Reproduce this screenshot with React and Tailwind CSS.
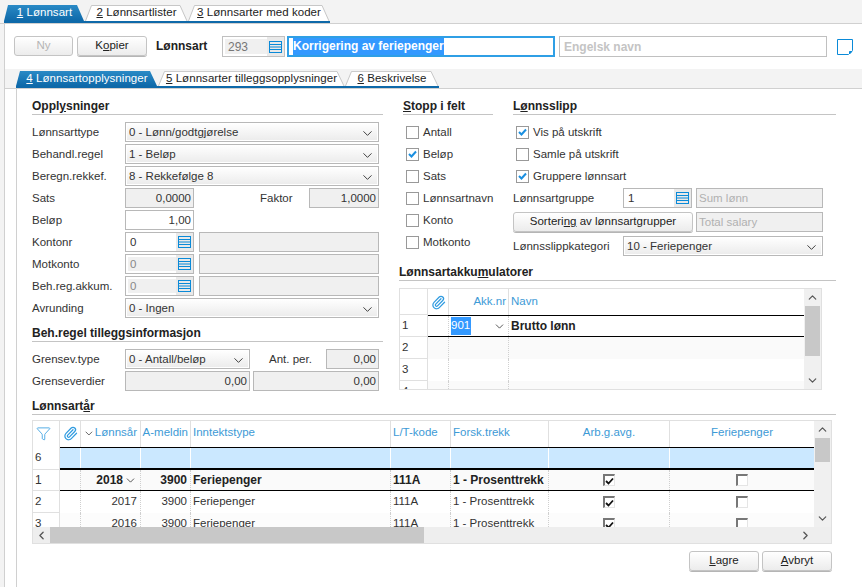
import { ChevronDown, ChevronUp, ChevronLeft, ChevronRight, Paperclip, Funnel } from 'lucide-react';

const TOP_TABS = [
  { key: '1', label: 'Lønnsart', w: 81, active: true },
  { key: '2', label: 'Lønnsartlister', w: 103 },
  { key: '3', label: 'Lønnsarter med koder', w: 142 },
];

const SUB_TABS = [
  { key: '4', label: 'Lønnsartopplysninger', w: 142, active: true },
  { key: '5', label: 'Lønnsarter tilleggsopplysninger', w: 187 },
  { key: '6', label: 'Beskrivelse', w: 94 },
];

const STOPP = [
  { label: 'Antall' },
  { label: 'Beløp', checked: true },
  { label: 'Sats' },
  { label: 'Lønnsartnavn' },
  { label: 'Konto' },
  { label: 'Motkonto' },
];

const YEARS = [
  { nr: 1, year: '2018', bold: true },
  { nr: 2, year: '2017' },
  { nr: 3, year: '2016', zebra: true },
];

function Tab({ tab }) {
  return (
    <div className="relative h-full shrink-0" style={{ width: tab.w }}>
      <svg className="absolute inset-0 h-full w-full" viewBox={`0 0 ${tab.w} 17`} preserveAspectRatio="none">
        <defs>
          <linearGradient id="tabBlue" x1="0" y1="0" x2="0" y2="1">
            <stop offset="0" stopColor="#2a8ac6" />
            <stop offset="1" stopColor="#0e69a9" />
          </linearGradient>
        </defs>
        {tab.active ? (
          <path d={`M0 17 L4 0 L${tab.w - 8} 0 L${tab.w - 1} 17 Z`} fill="url(#tabBlue)" />
        ) : (
          <path d={`M0.5 17 L6.5 0.5 L${tab.w - 8} 0.5 L${tab.w - 1} 17`} fill="#fff" stroke="#c4c4c4" />
        )}
      </svg>
      <div className={`relative flex h-full items-center justify-center text-[11.5px] tracking-[0.05px] whitespace-nowrap ${tab.active ? 'text-white' : 'text-[#222]'}`}>
        <span><u>{tab.key}</u> {tab.label}</span>
      </div>
    </div>
  );
}

function LookupIcon() {
  return (
    <svg width="13" height="12" viewBox="0 0 13 12" fill="none" stroke="#0a8ad8">
      <rect x="0.5" y="0.5" width="12" height="11" />
      <path d="M1 3.5H12M1 6H12M1 8.5H12" />
    </svg>
  );
}

function Button({ children, disabled, className = '' }) {
  return (
    <button className={`h-[20px] rounded-[3px] border border-[#c4c4c4] bg-gradient-to-b from-white to-[#ececec] text-[11.5px] shadow-[0_1px_0_#b5b5b5] ${disabled ? 'text-[#b5b5b5] shadow-none' : 'text-[#222]'} ${className}`}>
      {children}
    </button>
  );
}

function Select({ value, className = '' }) {
  return (
    <div className={`flex h-[20px] items-center justify-between border border-[#b8b8b8] bg-gradient-to-b from-white to-[#ebebeb] px-[3px] pt-[2px] text-[11.5px] text-[#333] shadow-[inset_0_0_0_1px_#fff] ${className}`}>
      <span>{value}</span>
      <ChevronDown size={15} strokeWidth={1.5} className="text-[#333]" />
    </div>
  );
}

function Field({ value, disabled, align = 'right', className = '', muted }) {
  return (
    <div className={`flex h-[20px] items-center border border-[#b8b8b8] px-[2px] pt-[2px] text-[11.5px] ${disabled ? 'bg-[#f0f0f0]' : 'bg-white'} ${align === 'right' ? 'justify-end' : 'justify-start'} ${muted ? 'text-[#b0b0b0]' : 'text-[#333]'} ${className}`}>
      {value}
    </div>
  );
}

function Lookup({ value, disabled, className = 'w-[69px]' }) {
  return (
    <div className={`flex h-[20px] shrink-0 items-stretch border border-[#b8b8b8] bg-white ${className}`}>
      <div className={`m-[2px] mr-0 flex flex-1 items-center pt-[2px] pl-[2px] text-[11.5px] ${disabled ? 'bg-[#f0f0f0] text-[#888]' : 'text-[#333]'}`}>{value}</div>
      <div className="flex w-[17px] items-center justify-center bg-[#e9e9e9]">
        <LookupIcon />
      </div>
    </div>
  );
}

function Heading({ children, className = '' }) {
  return (
    <div className={`border-b border-[#c4c4c4] text-[12px] leading-[16px] font-bold text-[#222] ${className}`}>
      {children}
    </div>
  );
}

function Label({ children, className = '' }) {
  return <div className={`shrink-0 pt-[2px] text-[11.5px] text-[#333] ${className}`}>{children}</div>;
}

function Row({ label, children }) {
  return (
    <div className="flex h-[22px] items-center">
      <Label className="w-[93px]">{label}</Label>
      {children}
    </div>
  );
}

function Check({ checked }) {
  return (
    <div className="flex h-[13px] w-[13px] shrink-0 items-center justify-center border border-[#999] bg-white">
      {checked && (
        <svg width="9" height="8" viewBox="0 0 9 8" fill="none" stroke="#1a8fe0" strokeWidth="2">
          <path d="M1 4 L3.5 6.5 L8 1.5" />
        </svg>
      )}
    </div>
  );
}

function CheckRow({ label, checked }) {
  return (
    <div className="flex h-[22px] items-center gap-[4px] pl-[3px]">
      <Check checked={checked} />
      <Label>{label}</Label>
    </div>
  );
}

function GridCheck({ checked }) {
  return (
    <div className="flex h-[12px] w-[12px] items-center justify-center border-t-2 border-r border-b border-l-2 border-t-[#777] border-r-[#e5e5e5] border-b-[#e5e5e5] border-l-[#777] bg-white">
      {checked && (
        <svg width="9" height="8" viewBox="0 0 9 8" fill="none" stroke="#111" strokeWidth="1.8">
          <path d="M1 4 L3.5 6.5 L8 1.5" />
        </svg>
      )}
    </div>
  );
}

function VScroll({ thumbH }) {
  return (
    <div className="flex w-[17px] shrink-0 flex-col items-center bg-[#f0f0f0]">
      <ChevronUp size={13} strokeWidth={2.2} className="h-[17px] text-[#555]" />
      <div className="flex-1 self-stretch px-[1px]">
        <div className="bg-[#c8c8c8]" style={{ height: thumbH }} />
      </div>
      <ChevronDown size={13} strokeWidth={2.2} className="h-[17px] text-[#555]" />
    </div>
  );
}

const AKK_COLS = 'grid grid-cols-[21px_60px_1fr]';

function AkkTable() {
  const cell = 'border-r border-dotted border-[#d0d0d0]';
  const num = 'flex w-[28px] shrink-0 items-center border-r border-b border-[#e0e0e0] pl-[2px] text-[#333]';
  return (
    <div className="mt-[7px] flex h-[102px] w-[423px] border border-[#e0e0e0] bg-white text-[11.5px]">
      <div className="min-w-0 flex-1 overflow-hidden">
        <div className="flex h-[26px] text-[#3d9ad6]">
          <div className="w-[28px] shrink-0 border-r border-b border-[#e0e0e0]" />
          <div className={`${AKK_COLS} flex-1`}>
            <div className="flex items-center justify-center border-r border-[#e0e0e0]">
              <Paperclip size={15} className="text-[#2f9be0]" />
            </div>
            <div className="flex items-center justify-end border-r border-[#e0e0e0] pr-[2px]">Akk.nr</div>
            <div className="flex items-center pl-[2px]">Navn</div>
          </div>
        </div>
        <div className="flex h-[22px]">
          <div className={num}>1</div>
          <div className={`${AKK_COLS} flex-1 border-y border-black`}>
            <div className={cell} />
            <div className={`${cell} flex items-center justify-between px-[2px]`}>
              <span className="bg-[#3399ff] pr-[1px] text-white">901</span>
              <ChevronDown size={13} strokeWidth={1.5} className="text-[#333]" />
            </div>
            <div className="flex items-center pl-[2px] text-[12px] font-bold text-[#222]">Brutto lønn</div>
          </div>
        </div>
        {[2, 3, 4].map(n => (
          <div key={n} className="flex h-[22px]">
            <div className={num}>{n}</div>
            <div className={`${AKK_COLS} flex-1 ${n % 2 === 0 ? 'bg-[#fafafa]' : ''}`}>
              <div className={cell} />
              <div className={cell} />
              <div />
            </div>
          </div>
        ))}
      </div>
      <VScroll thumbH={50} />
    </div>
  );
}

const YEAR_COLS = 'grid grid-cols-[21px_60px_50px_200px_60px_98px_121px_145px]';

function YearTable() {
  const head = 'flex items-center border-r border-[#e0e0e0] pb-[2px] whitespace-nowrap';
  const cell = 'flex items-center border-r border-dotted border-[#cfcfcf] whitespace-nowrap';
  const num = 'flex w-[27px] shrink-0 items-center border-r border-b border-[#e0e0e0] pl-[2px] font-normal text-[#333]';
  return (
    <div className="mt-[5px] flex h-[124px] w-[800px] flex-col border border-[#e0e0e0] bg-white text-[11.5px]">
      <div className="flex h-[106px]">
        <div className="min-w-0 flex-1 overflow-hidden">
          <div className="flex h-[26px] text-[#3d9ad6]">
            <div className={`${head} w-[27px] shrink-0 justify-start pl-[3px]`}><Funnel size={15} strokeWidth={1.3} className="text-[#2f9be0]" /></div>
            <div className={`${YEAR_COLS} flex-1`}>
              <div className={`${head} justify-center`}><Paperclip size={15} className="text-[#2f9be0]" /></div>
              <div className={`${head} justify-between pr-[3px] pl-[2px]`}>
                <ChevronDown size={13} strokeWidth={1.5} className="text-[#333]" />
                <span>Lønnsår</span>
              </div>
              <div className={`${head} justify-end pr-[2px]`}>A-meldin</div>
              <div className={`${head} pl-[2px]`}>Inntektstype</div>
              <div className={`${head} pl-[2px]`}>L/T-kode</div>
              <div className={`${head} pl-[2px]`}>Forsk.trekk</div>
              <div className={`${head} justify-center`}>Arb.g.avg.</div>
              <div className={`${head} justify-center`}>Feriepenger</div>
            </div>
          </div>
          <div className="flex h-[23px]">
            <div className={num}>6</div>
            <div className={`${YEAR_COLS} flex-1 border-t border-b-2 border-black bg-[#cbe8ff]`}>
              {[1, 2, 3, 4, 5, 6, 7, 8].map(i => (
                <div key={i} className="border-r border-white" />
              ))}
            </div>
          </div>
          {YEARS.map(r => {
            const bg = r.zebra ? 'bg-[#fcfcfc]' : r.bold ? 'bg-[#fafafa]' : 'bg-white';
            const weight = r.bold ? 'text-[12px] font-bold text-[#222]' : 'text-[#333]';
            return (
              <div key={r.nr} className={`flex ${r.bold ? 'h-[21px]' : 'h-[22px]'} ${weight}`}>
                <div className={num}>{r.nr}</div>
                <div className={`${YEAR_COLS} flex-1 ${bg} ${r.bold ? 'border-b border-black' : ''}`}>
                  <div className={cell} />
                  <div className={`${cell} justify-end pr-[3px]`}>
                    {r.year}
                    {r.bold && <ChevronDown size={13} strokeWidth={1.5} className="ml-[1px] text-[#333]" />}
                  </div>
                  <div className={`${cell} justify-end pr-[3px]`}>3900</div>
                  <div className={`${cell} pl-[2px]`}>Feriepenger</div>
                  <div className={`${cell} pl-[2px]`}>111A</div>
                  <div className={`${cell} pl-[2px]`}>1 - Prosenttrekk</div>
                  <div className={`${cell} justify-center`}><GridCheck checked /></div>
                  <div className={`${cell} justify-center`}><GridCheck /></div>
                </div>
              </div>
            );
          })}
        </div>
        <VScroll thumbH={24} />
      </div>
      <div className="flex h-[16px] flex-1 items-center bg-[#eeeeee]">
        <div className="flex w-[17px] justify-center"><ChevronLeft size={13} strokeWidth={2.4} className="text-[#555]" /></div>
        <div className="h-full w-[374px] bg-[#c8c8c8]" />
        <div className="flex-1" />
        <div className="mr-[17px] flex w-[17px] justify-center"><ChevronRight size={13} strokeWidth={2.4} className="text-[#555]" /></div>
      </div>
    </div>
  );
}

export default function App() {
  return (
    <div className="flex h-[587px] w-[862px] flex-col overflow-hidden bg-[#f3f3f3] font-['Liberation_Sans',Arial,sans-serif] text-[11.5px]">
      {/* Hovedfaner */}
      <div className="h-[24px] shrink-0 border-b border-[#d0d0d0] pt-[5px] pl-[4px]">
        <div className="flex h-[18px] w-fit border-b-2 border-[#0e69a9]">
          {TOP_TABS.map(t => <Tab key={t.key} tab={t} />)}
        </div>
      </div>

      <div className="ml-[4px] flex min-h-0 flex-1 flex-col border-l border-[#d0d0d0] bg-white">
        {/* Verktøylinje */}
        <div className="flex h-[45px] shrink-0 items-start gap-[4px] pt-[12px] pl-[9px]">
          <Button disabled className="w-[59px]">Ny</Button>
          <Button className="w-[70px]">K<u>o</u>pier</Button>
          <div className="ml-[5px] w-[62px] text-[12px] leading-[20px] font-bold text-[#222]">Lønnsart</div>
          <div className="flex h-[21px] w-[63px] items-stretch border border-[#c0c0c0] bg-white">
            <div className="m-[2px] mr-0 flex flex-1 items-center bg-[#f0f0f0] pl-[3px] text-[12px] text-[#777]">293</div>
            <div className="flex w-[17px] items-center justify-center bg-[#e9e9e9]"><LookupIcon /></div>
          </div>
          <div className="-ml-[2px] flex h-[21px] w-[268px] items-center border-2 border-[#2f9fe5] bg-white pl-[4px]">
            <span className="bg-[#3399ff] text-[12px] leading-[17px] font-bold text-white">Korrigering av feriepenger</span>
          </div>
          <div className="flex h-[21px] w-[268px] items-center border border-[#c0c0c0] bg-white pl-[4px] text-[12px] font-bold text-[#c4c4c4]">Engelsk navn</div>
          <svg className="mt-[3px] ml-[6px]" width="17" height="17" viewBox="0 0 17 17" fill="none" stroke="#0a8ad8">
            <path d="M0.5 0.5H15.5V11.5L11.5 15.5H0.5Z" />
            <path d="M15 12.5L12.5 15V12.5Z" fill="#0a8ad8" />
          </svg>
        </div>

        {/* Underfaner */}
        <div className="h-[20px] shrink-0 border-b border-[#d0d0d0] bg-[#f3f3f3] pt-[2px] pl-[11px]">
          <div className="flex h-[17px] w-fit border-b-2 border-[#0e69a9]">
            {SUB_TABS.map(t => <Tab key={t.key} tab={t} />)}
          </div>
        </div>

        <div className="ml-[11px] min-h-0 flex-1 border-l border-[#d0d0d0] pt-[9px] pl-[15px]">
          <div className="flex items-start">
            {/* Opplysninger */}
            <div className="w-[351px] shrink-0">
              <Heading>Oppl<u>y</u>sninger</Heading>
              <div className="mt-[6px]">
                <Row label="Lønnsarttype"><Select value="0 - Lønn/godtgjørelse" className="w-[254px]" /></Row>
                <Row label="Behandl.regel"><Select value="1 - Beløp" className="w-[254px]" /></Row>
                <Row label="Beregn.rekkef."><Select value="8 - Rekkefølge 8" className="w-[254px]" /></Row>
                <Row label="Sats">
                  <Field value="0,0000" disabled className="w-[69px]" />
                  <Label className="ml-[66px] w-[49px]">Faktor</Label>
                  <Field value="1,0000" disabled className="w-[70px]" />
                </Row>
                <Row label="Beløp"><Field value="1,00" className="w-[69px]" /></Row>
                <Row label="Kontonr">
                  <Lookup value="0" />
                  <Field disabled className="ml-[5px] w-[180px]" />
                </Row>
                <Row label="Motkonto">
                  <Lookup value="0" disabled />
                  <Field disabled className="ml-[5px] w-[180px]" />
                </Row>
                <Row label="Beh.reg.akkum.">
                  <Lookup value="0" disabled />
                  <Field disabled className="ml-[5px] w-[180px]" />
                </Row>
                <Row label="Avrunding"><Select value="0 - Ingen" className="w-[254px]" /></Row>
              </div>
              <Heading className="mt-[6px]">Beh.re<u>g</u>el tilleggsinformasjon</Heading>
              <div className="mt-[6px]">
                <Row label="Grensev.type">
                  <Select value="0 - Antall/beløp" className="w-[125px]" />
                  <Label className="ml-[19px] w-[57px]">Ant. per.</Label>
                  <Field value="0,00" disabled className="w-[53px]" />
                </Row>
                <Row label="Grenseverdier">
                  <Field value="0,00" disabled className="w-[125px]" />
                  <Field value="0,00" disabled className="ml-[3px] w-[126px]" />
                </Row>
              </div>
            </div>

            {/* Høyre del */}
            <div className="ml-[16px] w-[437px] shrink-0">
              <div className="flex pl-[4px]">
                <div className="w-[90px] shrink-0">
                  <Heading><u>S</u>topp i felt</Heading>
                  <div className="mt-[6px]">
                    {STOPP.map(s => <CheckRow key={s.label} label={s.label} checked={s.checked} />)}
                  </div>
                </div>
                <div className="ml-[20px] w-[323px] shrink-0">
                  <Heading>L<u>ø</u>nnsslipp</Heading>
                  <div className="mt-[6px]">
                    <CheckRow label="Vis på utskrift" checked />
                    <CheckRow label="Samle på utskrift" />
                    <CheckRow label="Gruppere lønnsart" checked />
                    <div className="mb-[1px] flex h-[22px] items-center">
                      <Label className="w-[110px]">Lønnsartgruppe</Label>
                      <Lookup value="1" />
                      <Field value="Sum lønn" align="left" disabled muted className="ml-[4px] w-[127px]" />
                    </div>
                    <div className="flex h-[24px] items-center">
                      <Button className="w-[180px]">Sorteri<u>ng</u> av lønnsartgrupper</Button>
                      <Field value="Total salary" align="left" disabled muted className="ml-[3px] w-[127px]" />
                    </div>
                    <div className="flex h-[24px] items-center">
                      <Label className="w-[110px]">Lønnsslippkategori</Label>
                      <Select value="10 - Feriepenger" className="w-[200px]" />
                    </div>
                  </div>
                </div>
              </div>
              <Heading className="mt-[6px]">Lønnsartakku<u>m</u>ulatorer</Heading>
              <AkkTable />
            </div>
          </div>

          {/* Lønnsartår */}
          <Heading className="mt-[6px] w-[804px]">Lønnsart<u>å</u>r</Heading>
          <YearTable />

          <div className="mt-[7px] flex w-[800px] justify-end gap-[3px]">
            <Button className="w-[70px]"><u>L</u>agre</Button>
            <Button className="w-[70px]"><u>A</u>vbryt</Button>
          </div>
        </div>
      </div>
    </div>
  );
}
